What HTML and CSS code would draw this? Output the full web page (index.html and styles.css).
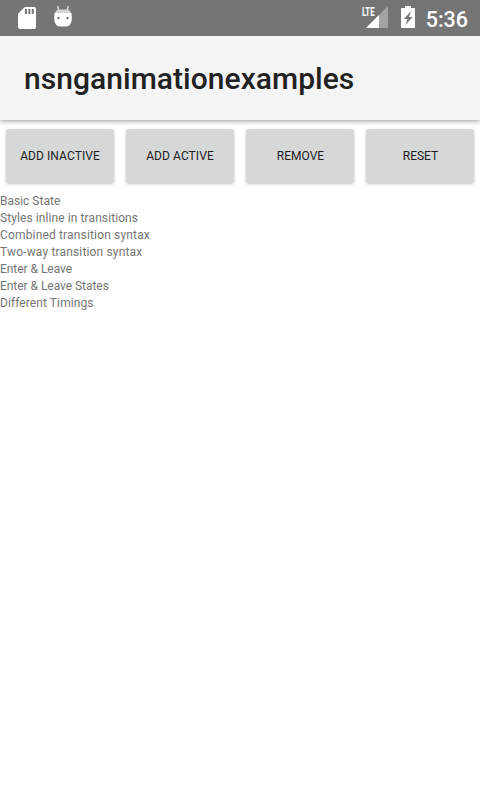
FILE: index.html
```html
<!DOCTYPE html>
<html lang="en">
<head>
<meta charset="utf-8">
<title>nsnganimationexamples</title>
<link rel="stylesheet" href="styles.css">
</head>
<body>
<div class="status-bar">
  <svg class="sd" width="18" height="22" viewBox="0 0 18 22"><path fill="#fff" fill-rule="evenodd" d="M6.8 0H16a2 2 0 0 1 2 2v18a2 2 0 0 1-2 2H2a2 2 0 0 1-2-2V6.700zM7 2v5h2V2zm3.400 0v5h2V2zm3.400 0v5h2V2z"/></svg>
  <svg class="droid" width="18" height="22" viewBox="0 0 18 22"><path d="M3.800 0 4.600 4M14.200 0 13.400 4" stroke="#e8e8e8" stroke-width="1.300"/><path fill="#fff" d="M.5 7h17l.3 5c0 5.500-2.300 8.500-5.800 8.500H6C2.500 20.500.2 17.500.2 12z"/><path fill="#d4d4d4" d="M1 7q1-3.500 4-3.500h8q3 0 4 3.500z"/><circle cx="4.500" cy="12" r="1.200" fill="#757575"/><circle cx="13.500" cy="12" r="1.200" fill="#757575"/></svg>
  <div class="signal">
    <svg width="22" height="22" viewBox="0 0 22 22"><path fill="#a3a3a3" d="M22 0v22H0z"/><path fill="#757575" d="M0 0h9v13H0z"/><path fill="#fff" d="M13 9v13H0z"/></svg>
    <span class="network">LTE</span>
  </div>
  <svg class="battery" width="14" height="22" viewBox="0 0 14 22"><path fill="#fff" d="M4 0h6v2h4v20H0V2h4z"/><path fill="#757575" d="M10 5 3 13h3.500L4.500 19l7-8H8z"/></svg>
  <span class="clock">5:36</span>
</div>
<header class="action-bar"><h1>nsnganimationexamples</h1></header>
<main>
  <div class="buttons">
    <button class="wide">ADD INACTIVE</button>
    <button class="wide">ADD ACTIVE</button>
    <button class="short">REMOVE</button>
    <button class="short">RESET</button>
  </div>
  <ul class="examples">
    <li>Basic State</li>
    <li class="loose">Styles inline in transitions</li>
    <li class="looser">Combined transition syntax</li>
    <li class="looser">Two-way transition syntax</li>
    <li class="tight">Enter &amp; Leave</li>
    <li class="tight">Enter &amp; Leave States</li>
    <li class="loose">Different Timings</li>
  </ul>
</main>
</body>
</html>
```
FILE: styles.css
```css
* { box-sizing: border-box; }
body {
  margin: 0;
  min-height: 100vh;
  background: #fff;
  font-family: Roboto, sans-serif;
}
.status-bar {
  position: relative;
  z-index: 1;
  display: flex;
  height: 36px;
  padding: 6px 12px 0 18px;
  background: #757575;
  color: #fff;
}
.status-bar svg { display: block; flex: none; }
.sd { margin-top: 1px; }
.droid { margin-left: 18px; }
.signal { position: relative; margin-left: auto; }
.network {
  position: absolute;
  left: -4px;
  top: 0;
  font: bold 13px/12px Roboto, sans-serif;
  transform: scaleX(.6);
  transform-origin: left;
}
.battery { margin-left: 13px; }
.clock {
  margin-left: 11px;
  font-size: 21.500px;
  font-weight: 500;
  line-height: 27px;
}
.action-bar {
  display: flex;
  align-items: center;
  height: 84px;
  padding: 2px 24px 0;
  background: #f4f4f4;
  box-shadow: 0 1px 5px rgba(0, 0, 0, .4);
}
h1 {
  margin: 0;
  color: #212121;
  font-size: 30px;
  font-weight: 500;
  line-height: 36px;
  letter-spacing: .04px;
}
.buttons {
  display: grid;
  grid-template-columns: repeat(4, 108px);
  gap: 12px;
  padding: 9px 6px 10px;
}
button {
  height: 54px;
  padding: 0;
  border: 0;
  border-radius: 3px;
  background: #d6d8d7;
  box-shadow: 0 1px 3px rgba(0, 0, 0, .25);
  color: #212121;
  font: 400 12px/14px Roboto, sans-serif;
}
.wide { letter-spacing: .08px; }
.short { padding-left: 1px; }
.examples {
  margin: 0;
  padding: 0;
  list-style: none;
  color: #757575;
  font-size: 12px;
  line-height: 17px;
}
.loose { letter-spacing: .09px; }
.looser { letter-spacing: .16px; }
.tight { letter-spacing: -.04px; }
```
